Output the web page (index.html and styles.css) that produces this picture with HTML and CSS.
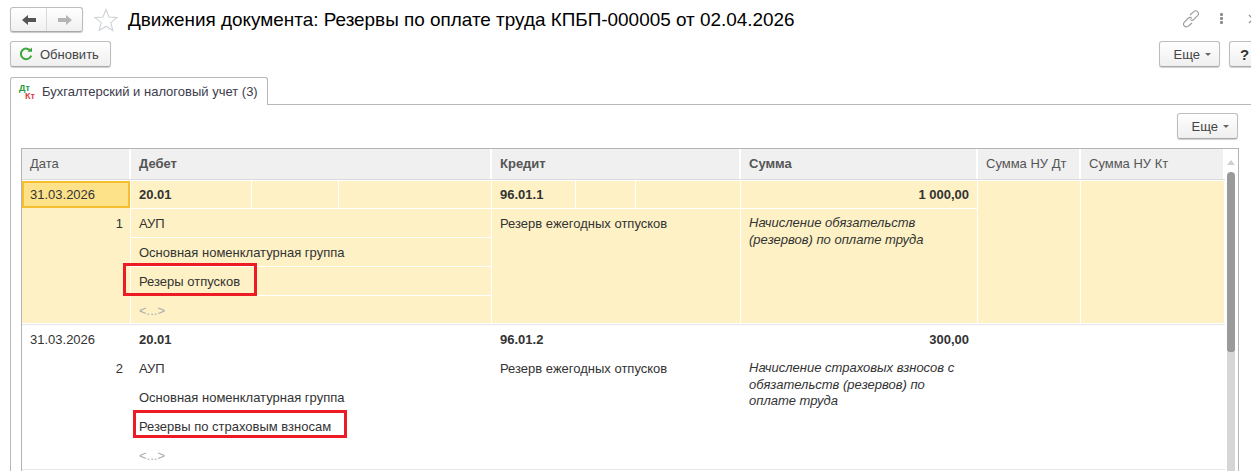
FILE: index.html
```html
<!DOCTYPE html>
<html lang="ru">
<head>
<meta charset="utf-8">
<title>Движения документа</title>
<link rel="stylesheet" href="styles.css">
</head>
<body>
<div class="page">
  <header class="titlebar">
    <div class="navgroup">
      <button class="navbtn">
        <svg width="16" height="12" viewBox="0 0 16 12"><path d="M1 6 L7 1 V4 H15 V8 H7 V11 Z" fill="#555"/></svg>
      </button>
      <button class="navbtn">
        <svg width="16" height="12" viewBox="0 0 16 12"><path d="M15 6 L9 1 V4 H1 V8 H9 V11 Z" fill="#b4b4b4"/></svg>
      </button>
    </div>
    <svg class="star" width="24" height="24" viewBox="0 0 24 24"><path d="M12 1.5 L15 9 L23 9.6 L16.8 14.6 L18.8 22.5 L12 18.2 L5.2 22.5 L7.2 14.6 L1 9.6 L9 9 Z" fill="#fff" stroke="#cfd3d6" stroke-width="1.1"/></svg>
    <h1 class="title">Движения документа: Резервы по оплате труда КПБП-000005 от 02.04.2026</h1>
    <div class="winicons">
      <svg width="18" height="18" viewBox="0 0 18 18" fill="none" stroke="#9a9a9a" stroke-width="1.1"><path d="M8 5 L11.5 1.8 A2.4 2.4 0 0 1 15.6 5.6 L11.5 9.8 A2.4 2.4 0 0 1 8.2 9.5"/><path d="M10 13 L6.5 16 A2.4 2.4 0 0 1 2.4 12.2 L6.5 8 A2.4 2.4 0 0 1 9.8 8.4"/></svg>
      <span class="dots"><i></i><i></i><i></i></span>
      <svg class="close" width="10" height="10" viewBox="0 0 10 10" stroke="#8a8a8a" stroke-width="1.2"><path d="M1 1 L9 9 M9 1 L1 9"/></svg>
    </div>
  </header>

  <div class="toolbar">
    <button class="btn refresh">
      <svg width="14" height="14" viewBox="0 0 14 14" fill="none"><path d="M11.6 4 A5.3 5.3 0 1 0 12.2 8.6" stroke="#3da63d" stroke-width="2"/><path d="M8.4 4.8 H13 V0.4 Z" fill="#3da63d"/></svg>
      Обновить
    </button>
    <span class="spacer"></span>
    <button class="btn more">Еще <b class="caret"></b></button>
    <button class="btn help">?</button>
  </div>

  <div class="tabs">
    <div class="tab">
      <span class="dtkt"><span class="dt">Дт</span><span class="kt">Кт</span></span>
      <span>Бухгалтерский и налоговый учет (3)</span>
    </div>
    <div class="tabline"></div>
  </div>

  <section class="panel">
    <div class="panelbar"><button class="btn more">Еще <b class="caret"></b></button></div>
    <div class="tablewrap">
      <div class="table">
        <div class="thead">
          <div class="th">Дата</div>
          <div class="th strong">Дебет</div>
          <div class="th strong">Кредит</div>
          <div class="th strong">Сумма</div>
          <div class="th">Сумма НУ Дт</div>
          <div class="th">Сумма НУ Кт</div>
        </div>

        <div class="rec selected">
          <div class="col">
            <div class="cell first datecell current">31.03.2026</div>
            <div class="cell grow num">1</div>
          </div>
          <div class="col">
            <div class="subs dsubs"><div class="cell first b">20.01</div><div class="cell first"></div><div class="cell first"></div></div>
            <div class="cell h29">АУП</div>
            <div class="cell h29">Основная номенклатурная группа</div>
            <div class="cell h29">Резеры отпусков</div>
            <div class="cell grow muted">&lt;...&gt;</div>
          </div>
          <div class="col">
            <div class="subs ksubs"><div class="cell first b">96.01.1</div><div class="cell first"></div><div class="cell first"></div></div>
            <div class="cell grow">Резерв ежегодных отпусков</div>
          </div>
          <div class="col">
            <div class="cell first b right">1 000,00</div>
            <div class="cell grow it">Начисление обязательств (резервов) по оплате труда</div>
          </div>
          <div class="col"><div class="cell grow"></div></div>
          <div class="col"><div class="cell grow"></div></div>
        </div>

        <div class="rec">
          <div class="col">
            <div class="cell first datecell">31.03.2026</div>
            <div class="cell grow num">2</div>
          </div>
          <div class="col">
            <div class="cell first b">20.01</div>
            <div class="cell h29">АУП</div>
            <div class="cell h29">Основная номенклатурная группа</div>
            <div class="cell h29">Резервы по страховым взносам</div>
            <div class="cell grow muted">&lt;...&gt;</div>
          </div>
          <div class="col">
            <div class="cell first b">96.01.2</div>
            <div class="cell grow">Резерв ежегодных отпусков</div>
          </div>
          <div class="col">
            <div class="cell first b right">300,00</div>
            <div class="cell grow it">Начисление страховых взносов с обязательств (резервов) по оплате труда</div>
          </div>
          <div class="col"></div>
          <div class="col"></div>
        </div>
      </div>
      <div class="scrollbar">
        <svg class="uparrow" width="8" height="5" viewBox="0 0 8 5"><path d="M4 0 L8 5 H0 Z" fill="#cfcfcf"/></svg>
        <div class="gap"></div>
        <div class="thumb"></div>
        <div class="track"></div>
      </div>
      <div class="mark mark1"></div>
      <div class="mark mark2"></div>
    </div>
  </section>
</div>
</body>
</html>
```

FILE: styles.css
```css
* { box-sizing: border-box; }
html, body { margin: 0; padding: 0; height: 471px; overflow: hidden; background: #fff; }
body { font-family: "Liberation Sans", Arial, sans-serif; font-size: 13px; color: #333; }
.page { width: 1251px; height: 471px; overflow: hidden; padding: 7px 0 0 10px; }

button { font: inherit; color: inherit; }

.titlebar { display: flex; align-items: center; height: 25px; }
.navgroup { display: flex; width: 73px; height: 25px; border: 1px solid #bdbdbd; border-bottom-color: #a8a8a8; border-radius: 3px; background: linear-gradient(#fff, #f0f0f0); box-shadow: 0 1px 1px #c8c8c8; }
.navbtn { flex: 1; padding: 0; border: 0; background: none; display: flex; align-items: center; justify-content: center; }
.navbtn + .navbtn { border-left: 1px solid #d8d8d8; }
.star { margin-left: 11px; flex: none; }
.title { margin: 0 0 0 10px; font-size: 18.92px; font-weight: 400; color: #000; white-space: nowrap; }
.winicons { margin-left: auto; margin-bottom: 2px; display: flex; align-items: center; }
.winicons .close { margin-left: 25px; margin-right: -7px; }
.dots { display: flex; flex-direction: column; gap: 1px; margin-left: 20px; }
.dots i { display: block; width: 3px; height: 3px; background: #8c8c8c; border-radius: 1px; }

.toolbar { display: flex; align-items: flex-start; margin-top: 9px; height: 26px; }
.spacer { flex: 1; }
.btn { display: flex; align-items: center; height: 26px; padding: 0 8px; border: 1px solid #bdbdbd; border-bottom-color: #a8a8a8; border-radius: 3px; background: linear-gradient(#fff, #efefef); box-shadow: 0 1px 1px #d0d0d0; color: #444; white-space: nowrap; flex: none; }
.refresh { width: 101px; gap: 7px; padding-left: 8px; }
.more { width: 61px; justify-content: flex-end; padding: 0 8px 0 0; gap: 5px; }
.toolbar .help { width: 22px; margin-left: 9px; padding: 0 0 0 10px; font-size: 15px; font-weight: 700; color: #333; border-right: 0; border-radius: 3px 0 0 3px; }
.caret { display: block; width: 0; height: 0; border: 3px solid transparent; border-top: 3px solid #666; border-bottom: 0; }

.tabs { display: flex; align-items: flex-end; margin-top: 10px; height: 28px; }
.tab { display: flex; align-items: center; width: 258px; height: 28px; border: 1px solid #b8b8b8; border-bottom: 0; border-radius: 3px 3px 0 0; padding-left: 8px; gap: 7px; background: #fff; color: #3c3c4c; }
.tabline { flex: 1; border-bottom: 1px solid #b8b8b8; }
.dtkt { display: flex; flex-direction: column; width: 16px; font-size: 9px; line-height: 8px; font-weight: 700; }
.dt { display: block; height: 8px; color: #1f9a3a; }
.kt { display: block; height: 8px; color: #e03c40; margin-left: 6px; }

.panel { border-left: 1px solid #b8b8b8; height: 366px; padding: 0 0 0 10px; }
.panelbar { display: flex; height: 43px; padding: 8px 13px 0 0; justify-content: flex-end; }

.tablewrap { position: relative; display: flex; width: 1218px; height: 323px; border: 1px solid #b4b4b4; border-bottom: 0; }
.table { width: 1203px; flex: none; }
.thead, .rec { display: grid; grid-template-columns: 109px 361px 249px 237px 103px 144px; }
.thead { height: 31px; border-bottom: 1px solid #dcdcdc; }
.th { background: #f0f0f0; border-right: 2px solid #fff; padding: 0 8px; line-height: 29px; color: #555; }
.th.strong { font-weight: 700; }
.rec { height: 145px; border-bottom: 1px solid #e6e6e6; padding: 1px 0; }
.rec.selected { background: #fdf1c5; background-clip: content-box; }
.col { display: flex; flex-direction: column; border-right: 1px solid #fff; min-width: 0; }
.subs { display: grid; }
.dsubs { grid-template-columns: 120px 87px 1fr; }
.ksubs { grid-template-columns: 83px 60px 1fr; }
.cell { padding: 7px 8px 0; line-height: 15px; }
.h29 { height: 29px; flex: none; }
.first { height: 28px; flex: none; padding-top: 6px; }
.grow { flex: 1; }
.selected .cell { border-bottom: 1px solid #fff; }
.selected .subs .cell + .cell { border-left: 1px solid #fff; }
.selected .grow { border-bottom: 0; }
.b { font-weight: 700; }
.right { text-align: right; }
.num { text-align: right; padding-right: 7px; }
.muted { color: #aaa; }
.it { font-style: italic; padding-right: 14px; line-height: 16.5px; padding-top: 6px; }
.selected .current { height: 27px; margin-bottom: 1px; border-bottom: 0; background: #fee28a; box-shadow: inset 0 0 0 2px #f5bf30; }

.scrollbar { display: flex; flex-direction: column; width: 8px; margin-left: 2px; }
.uparrow { flex: none; margin-top: 11px; }
.gap { height: 7px; flex: none; }
.thumb { height: 180px; background: #9a9a9a; border-radius: 4px 4px 2px 2px; flex: none; }
.track { flex: 1; background: #d6d6d6; }

.mark { position: absolute; border: 3px solid #ed1c24; pointer-events: none; }
.mark1 { left: 101px; top: 114px; width: 134px; height: 33px; }
.mark2 { left: 111px; top: 261px; width: 214px; height: 28px; }
```
